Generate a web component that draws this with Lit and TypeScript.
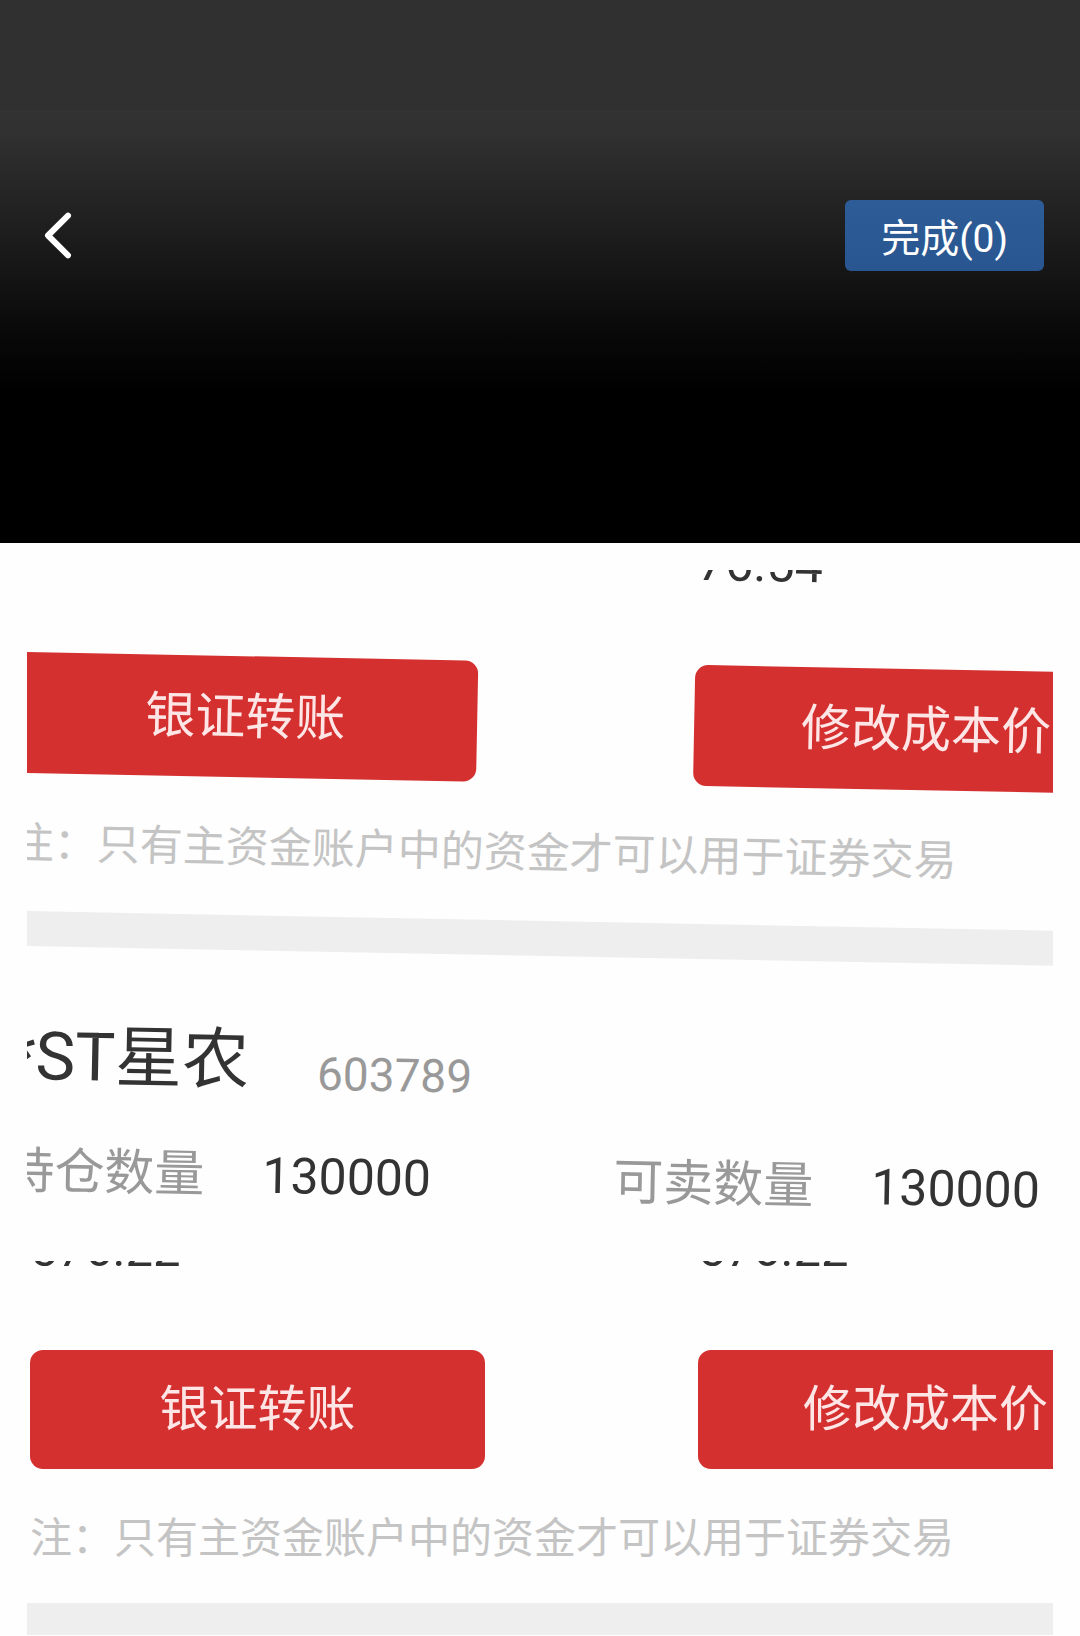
import { LitElement, html, css } from "lit";
import { customElement, property, state } from "lit/decorators.js";

interface Holding {
  name: string;
  code: string;
  fields: { label: string; value: string }[];
}

@customElement("account-sheet")
class AccountSheet extends LitElement {
  @property({ attribute: false }) values: string[] = [];
  @property({ attribute: false }) holding?: Holding;

  static styles = css`
    :host {
      display: block;
      color: #333;
      font-size: var(--sheet-text);
      line-height: 60px;
    }
    .columns {
      display: grid;
      grid-template-columns: 1fr 1fr;
      column-gap: var(--sheet-gap);
    }
    .value {
      grid-column: 1;
      grid-row: 1;
    }
    .value + .value,
    .value.only {
      grid-column: 2;
    }
    .actions {
      margin-top: var(--sheet-lead);
    }
    .action {
      height: var(--sheet-button);
      padding: 0;
      border: 0;
      border-radius: 13px;
      background: #d53030;
      color: #ffe6e6;
      font: inherit;
      white-space: nowrap;
    }
    .note {
      margin: 40px 0 0;
      color: #c4c4c4;
      font-size: var(--sheet-note);
      white-space: nowrap;
    }
    .band {
      height: 35px;
      margin: var(--sheet-band) 0 0 -3px;
      border: 0;
      background: #eee;
    }
    .title {
      display: flex;
      align-items: flex-end;
      gap: 68px;
      margin-top: 70px;
    }
    .name {
      margin: 0;
      font-size: 67px;
      font-weight: 400;
      line-height: 80px;
      white-space: nowrap;
    }
    .code {
      color: #999;
      font-size: 46px;
      line-height: 56px;
    }
    .fields {
      display: grid;
      grid-template-columns: 609fr 536fr;
      margin: 45px 0 0;
      white-space: nowrap;
    }
    .field {
      display: flex;
      gap: 58px;
    }
    .label {
      color: #999;
    }
    .number {
      margin: 0;
    }
  `;

  render() {
    const valueClass = this.values.length === 1 ? "value only" : "value";
    return html`
      <div class="columns">
        ${this.values.map((v) => html`<span class=${valueClass}>${v}</span>`)}
      </div>
      <div class="columns actions">
        <button class="action" type="button">银证转账</button>
        <button class="action" type="button">修改成本价</button>
      </div>
      <p class="note">注：只有主资金账户中的资金才可以用于证券交易</p>
      <hr class="band" />
      ${this.holding
        ? html`
            <div class="title">
              <h2 class="name">${this.holding.name}</h2>
              <span class="code">${this.holding.code}</span>
            </div>
            <dl class="fields">
              ${this.holding.fields.map(
                (f) => html`<div class="field">
                  <dt class="label">${f.label}</dt>
                  <dd class="number">${f.value}</dd>
                </div>`
              )}
            </dl>
          `
        : null}
    `;
  }
}

@customElement("app-root")
class AppRoot extends LitElement {
  @state() private picked = 0;

  private holding: Holding = {
    name: "*ST星农",
    code: "603789",
    fields: [
      { label: "持仓数量", value: "130000" },
      { label: "可卖数量", value: "130000" },
    ],
  };

  static styles = css`
    :host {
      display: block;
      background: #fefefe;
      font-family: Roboto, "Noto Sans CJK SC", sans-serif;
    }
    .top {
      box-sizing: border-box;
      height: 543px;
      padding: 200px 36px 0 28px;
      display: flex;
      justify-content: space-between;
      align-items: flex-start;
      background: linear-gradient(
        #303030 110px,
        #333 110px,
        #303030 136px,
        #1c1c1c 240px,
        #080808 336px,
        #000 392px
      );
    }
    .back {
      display: flex;
      padding: 12px;
      border: 0;
      background: none;
    }
    .chevron {
      display: block;
      width: 36px;
      height: 48px;
    }
    .done {
      height: 71px;
      padding: 6px 36px 0;
      border: 0;
      border-radius: 6px;
      background: linear-gradient(#2d5c97, #295690);
      color: #fff;
      font: inherit;
      font-size: 39px;
      line-height: 60px;
      white-space: nowrap;
    }
    .photo {
      margin: 0 27px;
      overflow: hidden;
    }
    .tilted {
      margin-top: 27px;
    }
    .tilted-sheet {
      --sheet-text: 50px;
      --sheet-note: 43px;
      --sheet-gap: 217px;
      --sheet-button: 121px;
      --sheet-lead: 72px;
      --sheet-band: 38px;
      width: calc(100% + 119px);
      margin: -50px 0 60px -11px;
      transform: rotate(1.1deg);
      transform-origin: 11px 50px;
    }
    .straight-sheet {
      --sheet-text: 49px;
      --sheet-note: 42px;
      --sheet-gap: 213px;
      --sheet-button: 119px;
      --sheet-lead: 70px;
      --sheet-band: 34px;
      width: calc(100% + 97px);
      margin: -41px 0 -3px 3px;
    }
  `;

  render() {
    return html`
      <header class="top">
        <button class="back" type="button" aria-label="返回">
          <svg class="chevron" viewBox="0 0 36 48" aria-hidden="true">
            <path
              d="M28 3.700 8 23.500 28 43.300"
              fill="none"
              stroke="#fff"
              stroke-width="6"
              stroke-linecap="round"
              stroke-linejoin="round"
            />
          </svg>
        </button>
        <button class="done" type="button">完成(${this.picked})</button>
      </header>
      <main>
        <section class="photo tilted">
          <account-sheet
            class="tilted-sheet"
            .values=${["76.54"]}
            .holding=${this.holding}
          ></account-sheet>
        </section>
        <section class="photo">
          <account-sheet
            class="straight-sheet"
            .values=${["576.22", "576.22"]}
          ></account-sheet>
        </section>
      </main>
    `;
  }
}
